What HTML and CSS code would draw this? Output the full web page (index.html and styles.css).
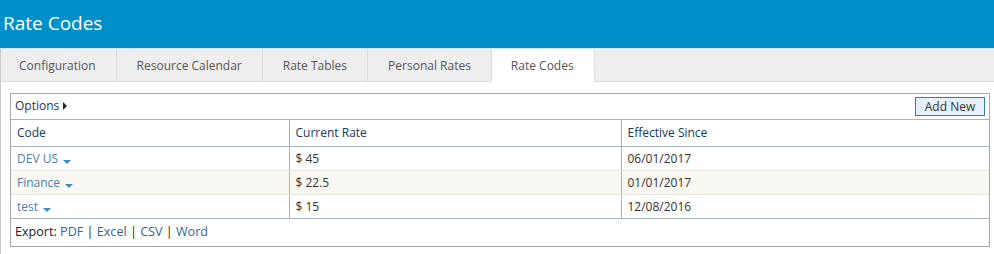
FILE: index.html
```html
<!DOCTYPE html>
<html lang="en">
<head>
  <meta charset="UTF-8" />
  <title>Rate Codes</title>
  <link rel="stylesheet" href="styles.css">
</head>
<body>

  <header class="page-title">Rate Codes</header>

  <nav class="tabs">
    <a href="#">Configuration</a>
    <a href="#">Resource Calendar</a>
    <a href="#">Rate Tables</a>
    <a href="#">Personal Rates</a>
    <a href="#" class="active">Rate Codes</a>
  </nav>

  <main class="content">
    <div class="grid-box">
      <div class="toolbar">
        <a href="#" class="options">Options <span class="arrow-right"></span></a>
        <button class="add-btn">Add New</button>
      </div>

      <table class="grid">
        <thead>
          <tr>
            <th class="col-code">Code</th>
            <th class="col-rate">Current Rate</th>
            <th>Effective Since</th>
          </tr>
        </thead>
        <tbody>
          <tr>
            <td><a href="#" class="code-link">DEV US</a><span class="caret"></span></td>
            <td>$ 45</td>
            <td>06/01/2017</td>
          </tr>
          <tr class="alt">
            <td><a href="#" class="code-link">Finance</a><span class="caret"></span></td>
            <td>$ 22.5</td>
            <td>01/01/2017</td>
          </tr>
          <tr>
            <td><a href="#" class="code-link">test</a><span class="caret"></span></td>
            <td>$ 15</td>
            <td>12/08/2016</td>
          </tr>
        </tbody>
      </table>

      <div class="export">
        Export: <a href="#">PDF</a> | <a href="#">Excel</a> | <a href="#">CSV</a> | <a href="#">Word</a>
      </div>
    </div>
  </main>

</body>
</html>
```

FILE: styles.css
```css
* {
  margin: 0;
  padding: 0;
  box-sizing: border-box;
}

body {
  font-family: "Open Sans", Arial, sans-serif;
  font-size: 12px;
  color: #333;
  background: #fff;
}

a {
  text-decoration: none;
}

.page-title {
  height: 49px;
  background: #0090c9;
  color: #fff;
  font-size: 19px;
  padding: 10px 0 0 3px;
  border-bottom: 1px solid #cfe9f3;
}

/* Tabs */
.tabs {
  display: flex;
  height: 33px;
  background: #eeeeee;
  border-bottom: 1px solid #dcdcdc;
  border-left: 1px solid #cccccc;
}

.tabs a {
  display: flex;
  align-items: center;
  padding: 0 20px;
  font-size: 12px;
  color: #555;
  border-right: 1px solid #dcdcdc;
}

.tabs a:first-child {
  padding-left: 18px;
}

.tabs a.active {
  background: #fff;
  height: 33px;
  padding: 0 20px 0 19px;
  border-left: 1px solid #dcdcdc;
  margin-left: -1px;
}

/* Grid box */
.content {
  border-left: 1px solid #cccccc;
  padding: 11px 4px 8px 9px;
  min-height: 172px;
}

.grid-box {
  width: 980px;
  border: 1px solid #a7a7a7;
}

.toolbar {
  display: flex;
  justify-content: space-between;
  align-items: center;
  height: 26px;
  padding: 0 4px 2px 4px;
  border-bottom: 1px solid #a9b5c2;
}

.options {
  color: #1b3a5e;
  display: flex;
  align-items: center;
  gap: 4px;
}

.arrow-right {
  width: 0;
  height: 0;
  border-top: 4px solid transparent;
  border-bottom: 4px solid transparent;
  border-left: 4px solid #1b2a3a;
}

.add-btn {
  font-family: inherit;
  font-size: 12px;
  color: #333;
  background: #e4f1fa;
  border: 1px solid #3a7f97;
  height: 19px;
  width: 70px;
  margin-top: 2px;
}

.grid {
  width: 100%;
  border-collapse: collapse;
}

.grid th {
  text-align: left;
  font-weight: normal;
  color: #163760;
  height: 26px;
  padding: 0 6px;
  border-bottom: 1px solid #a9b5c2;
  border-right: 1px solid #a9b5c2;
}

.grid th:last-child,
.grid td:last-child {
  border-right: none;
}

.col-code {
  width: 278px;
}

.col-rate {
  width: 332px;
}

.grid td {
  height: 24px;
  padding: 0 6px;
  color: #333;
  border-bottom: 1px solid #e8e6dc;
  border-right: 1px solid #a9b5c2;
}

.grid tbody tr:last-child td {
  border-bottom: 1px solid #a9b5c2;
}

.grid tr.alt td {
  background: #f9f8f3;
}

.code-link {
  color: #4f7fae;
}

.caret {
  display: inline-block;
  width: 0;
  height: 0;
  margin-left: 5px;
  vertical-align: -1px;
  border-left: 4px solid transparent;
  border-right: 4px solid transparent;
  border-top: 4px solid #3a8cc6;
}

.export {
  height: 27px;
  line-height: 25px;
  padding: 0 4px;
  font-size: 12.6px;
  color: #222;
}

.export a {
  color: #2f6a93;
}
```
